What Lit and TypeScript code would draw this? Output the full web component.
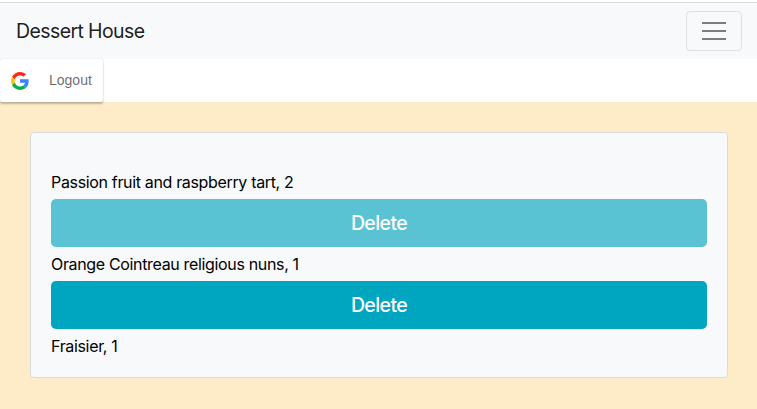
import { LitElement, html, css } from "lit";
import { customElement, state } from "lit/decorators.js";
import { classMap } from "lit/directives/class-map.js";

interface OrderItem {
  name: string;
  quantity: number;
  deletable: boolean;
  faded?: boolean;
}

@customElement("nav-bar")
class NavBar extends LitElement {
  static styles = css`
    :host {
      display: block;
      border-top: 1px solid #d7d9e2;
      background: #f8f9fb;
    }
    .bar {
      box-sizing: border-box;
      height: 56px;
      padding: 0 15px 0 16px;
      display: flex;
      align-items: center;
      justify-content: space-between;
    }
    .brand {
      font-size: 19.5px;
      line-height: 30px;
      letter-spacing: -0.6px;
      color: rgba(0, 0, 0, 0.9);
    }
    .toggle {
      box-sizing: border-box;
      width: 56px;
      height: 40px;
      padding: 0;
      display: flex;
      align-items: center;
      justify-content: center;
      background: transparent;
      border: 1px solid rgba(0, 0, 0, 0.1);
      border-radius: 4px;
    }
    .lines {
      width: 24px;
      height: 18px;
      display: block;
    }
  `;

  render() {
    return html`
      <nav class="bar">
        <span class="brand">Dessert House</span>
        <button class="toggle" aria-label="Toggle navigation">
          <svg class="lines" viewBox="0 0 24 18" fill="#7c7d7d">
            <rect width="24" height="2" />
            <rect y="8" width="24" height="2" />
            <rect y="16" width="24" height="2" />
          </svg>
        </button>
      </nav>
    `;
  }
}

@customElement("google-button")
class GoogleButton extends LitElement {
  static styles = css`
    :host {
      display: inline-flex;
      position: relative;
      z-index: 1;
    }
    .button {
      display: flex;
      align-items: center;
      height: 43px;
      width: 103px;
      box-sizing: border-box;
      padding: 0 0 0 11px;
      gap: 20px;
      border: 0;
      border-radius: 2px;
      background: #fff;
      color: rgba(0, 0, 0, 0.6);
      box-shadow: 0 2px 2px 0 rgba(0, 0, 0, 0.24), 0 0 1px 0 rgba(0, 0, 0, 0.24);
      font: 14px "Liberation Sans", sans-serif;
    }
    .logo {
      width: 18px;
      height: 18px;
      flex: none;
    }
    .label {
      padding-bottom: 1px;
    }
  `;

  render() {
    return html`
      <button class="button">
        <svg class="logo" viewBox="0 0 18 18">
          <path fill="#ff2a16" d="M9 3.48c1.69 0 2.83.73 3.48 1.34l2.54-2.48C13.46.89 11.43 0 9 0 5.48 0 2.44 2.02.96 4.96l2.91 2.26C4.6 5.05 6.62 3.48 9 3.48z" />
          <path fill="#3b82ff" d="M17.64 9.2c0-.74-.06-1.28-.19-1.84H9v3.34h4.96c-.1.83-.64 2.08-1.84 2.92l2.84 2.2c1.7-1.57 2.68-3.88 2.68-6.62z" />
          <path fill="#ffc107" d="M3.88 10.78A5.54 5.54 0 0 1 3.58 9c0-.62.11-1.22.29-1.78L.96 4.96A9.008 9.008 0 0 0 0 9c0 1.45.35 2.82.96 4.04l2.92-2.26z" />
          <path fill="#0aae4b" d="M9 18c2.43 0 4.47-.8 5.96-2.18l-2.84-2.2c-.76.53-1.78.9-3.12.9-2.38 0-4.4-1.57-5.12-3.74L.97 13.04C2.45 15.98 5.48 18 9 18z" />
        </svg>
        <span class="label">Logout</span>
      </button>
    `;
  }
}

@customElement("app-root")
class AppRoot extends LitElement {
  static styles = css`
    :host {
      display: flex;
      flex-direction: column;
      box-sizing: border-box;
      height: 409px;
      padding-top: 2px;
      background: #fff;
      font-family: Inter, "Liberation Sans", sans-serif;
      color: #000;
    }
    .account {
      height: 43px;
      display: flex;
    }
    .page {
      flex: 1;
      box-sizing: border-box;
      padding: 30px 29px 30px 30px;
      background: #feebc8;
    }
    .card {
      box-sizing: border-box;
      height: 246px;
      padding: 37px 20px 19px;
      background: #f8f9fb;
      border: 1px solid #d8dadb;
      border-radius: 4px;
    }
    .item {
      font-size: 16px;
      line-height: 24px;
      letter-spacing: -0.34px;
    }
    .delete {
      display: block;
      width: 100%;
      height: 48px;
      margin: 5px 0;
      padding: 0;
      border: 0;
      border-radius: 5px;
      background: #00a5c0;
      color: #fff;
      font: 500 19.5px/30px Inter, "Liberation Sans", sans-serif;
      letter-spacing: -0.6px;
    }
    .faded {
      background: #59c2d3;
    }
  `;

  @state() private items: OrderItem[] = [
    { name: "Passion fruit and raspberry tart", quantity: 2, deletable: true, faded: true },
    { name: "Orange Cointreau religious nuns", quantity: 1, deletable: true },
    { name: "Fraisier", quantity: 1, deletable: false },
  ];

  render() {
    return html`
      <nav-bar></nav-bar>
      <div class="account"><google-button></google-button></div>
      <main class="page">
        <section class="card">
          ${this.items.map(
            (item) => html`
              <div class="item"><span>${item.name}, ${item.quantity}</span></div>
              ${item.deletable
                ? html`<button class=${classMap({ delete: true, faded: !!item.faded })}>Delete</button>`
                : null}
            `
          )}
        </section>
      </main>
    `;
  }
}
